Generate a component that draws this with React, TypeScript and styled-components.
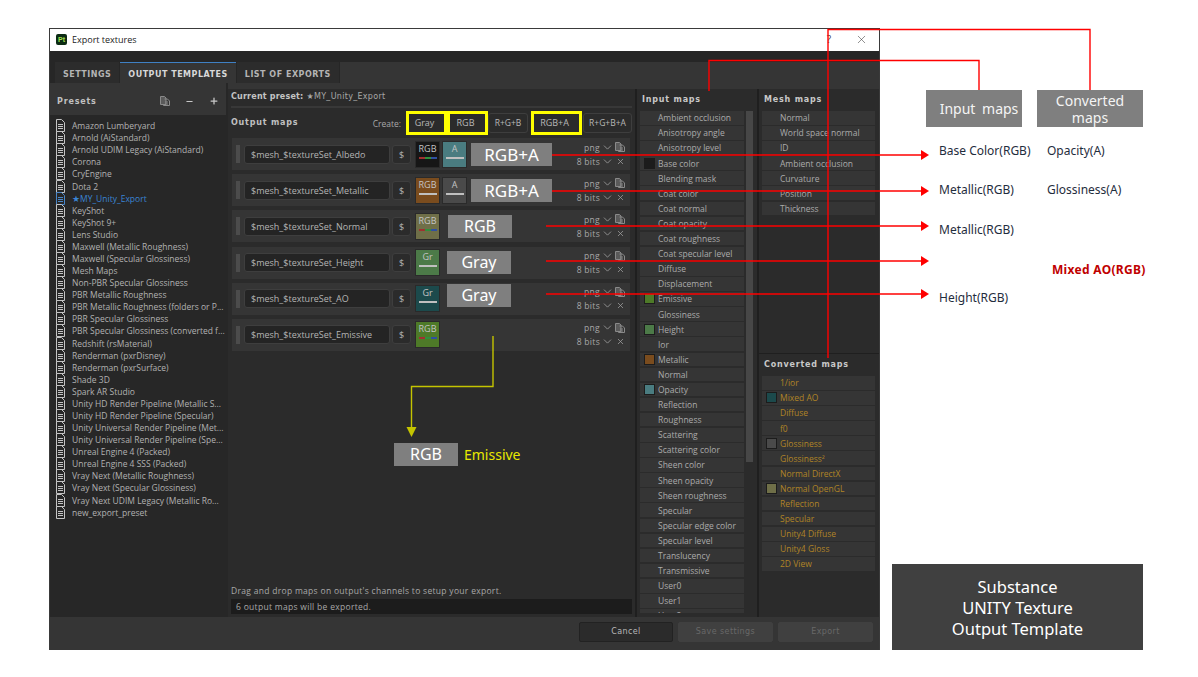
import styled, { createGlobalStyle } from "styled-components";
import { ChevronDown, Minus, Plus, X } from "lucide-react";

interface OutputRow {
  name: string;
  channels: { label: string; color: string; tri?: boolean }[];
  tag?: string;
  tagWidth?: number;
  tagGap?: number;
  tagTop?: number;
  tagSize?: number;
}

const PRESETS = [
  "Amazon Lumberyard",
  "Arnold (AiStandard)",
  "Arnold UDIM Legacy (AiStandard)",
  "Corona",
  "CryEngine",
  "Dota 2",
  "★MY_Unity_Export",
  "KeyShot",
  "KeyShot 9+",
  "Lens Studio",
  "Maxwell (Metallic Roughness)",
  "Maxwell (Specular Glossiness)",
  "Mesh Maps",
  "Non-PBR Specular Glossiness",
  "PBR Metallic Roughness",
  "PBR Metallic Roughness (folders or P...",
  "PBR Specular Glossiness",
  "PBR Specular Glossiness (converted f...",
  "Redshift (rsMaterial)",
  "Renderman (pxrDisney)",
  "Renderman (pxrSurface)",
  "Shade 3D",
  "Spark AR Studio",
  "Unity HD Render Pipeline (Metallic S...",
  "Unity HD Render Pipeline (Specular)",
  "Unity Universal Render Pipeline (Met...",
  "Unity Universal Render Pipeline (Spe...",
  "Unreal Engine 4 (Packed)",
  "Unreal Engine 4 SSS (Packed)",
  "Vray Next (Metallic Roughness)",
  "Vray Next (Specular Glossiness)",
  "Vray Next UDIM Legacy (Metallic Ro...",
  "new_export_preset",
];

const ROWS: OutputRow[] = [
  {
    name: "$mesh_$textureSet_Albedo",
    channels: [
      { label: "RGB", color: "#161616", tri: true },
      { label: "A", color: "#4a7c80" },
    ],
    tag: "RGB+A",
    tagWidth: 81,
    tagGap: 4,
    tagSize: 17,
  },
  {
    name: "$mesh_$textureSet_Metallic",
    channels: [
      { label: "RGB", color: "#7a4c1e" },
      { label: "A", color: "#4a4a4a" },
    ],
    tag: "RGB+A",
    tagWidth: 81,
    tagGap: 4,
    tagSize: 17,
  },
  {
    name: "$mesh_$textureSet_Normal",
    channels: [{ label: "RGB", color: "#6f6f48", tri: true }],
    tag: "RGB",
    tagWidth: 64,
    tagGap: 8,
  },
  {
    name: "$mesh_$textureSet_Height",
    channels: [{ label: "Gr", color: "#4c7a48" }],
    tag: "Gray",
    tagWidth: 64,
    tagGap: 7,
  },
  {
    name: "$mesh_$textureSet_AO",
    channels: [{ label: "Gr", color: "#1c4a4c" }],
    tag: "Gray",
    tagWidth: 64,
    tagGap: 7,
    tagTop: -7,
  },
  {
    name: "$mesh_$textureSet_Emissive",
    channels: [{ label: "RGB", color: "#4e7a28", tri: true }],
  },
];

const INPUT_MAPS: [string, string?][] = [
  ["Ambient occlusion"],
  ["Anisotropy angle"],
  ["Anisotropy level"],
  ["Base color", "#1c1c1c"],
  ["Blending mask"],
  ["Coat color"],
  ["Coat normal"],
  ["Coat opacity"],
  ["Coat roughness"],
  ["Coat specular level"],
  ["Diffuse"],
  ["Displacement"],
  ["Emissive", "#4e7a28"],
  ["Glossiness"],
  ["Height", "#4c7a48"],
  ["Ior"],
  ["Metallic", "#7a4c1e"],
  ["Normal"],
  ["Opacity", "#4a7c80"],
  ["Reflection"],
  ["Roughness"],
  ["Scattering"],
  ["Scattering color"],
  ["Sheen color"],
  ["Sheen opacity"],
  ["Sheen roughness"],
  ["Specular"],
  ["Specular edge color"],
  ["Specular level"],
  ["Translucency"],
  ["Transmissive"],
  ["User0"],
  ["User1"],
  ["User2"],
];

const MESH_MAPS: [string, string?][] = [
  ["Normal"],
  ["World space normal"],
  ["ID"],
  ["Ambient occlusion"],
  ["Curvature"],
  ["Position"],
  ["Thickness"],
];

const CONVERTED_MAPS: [string, string?][] = [
  ["1/ior"],
  ["Mixed AO", "#1c4a4c"],
  ["Diffuse"],
  ["f0"],
  ["Glossiness", "#4a4a4a"],
  ["Glossiness²"],
  ["Normal DirectX"],
  ["Normal OpenGL", "#6f6f48"],
  ["Reflection"],
  ["Specular"],
  ["Unity4 Diffuse"],
  ["Unity4 Gloss"],
  ["2D View"],
];

const ARROWS = [
  { x: 552, y: 155 },
  { x: 552, y: 191 },
  { x: 546, y: 226 },
  { x: 546, y: 261 },
  { x: 546, y: 294 },
];

function DocIcon({ color = "#c4c4c4" }: { color?: string }) {
  return (
    <svg width="9" height="13" viewBox="0 0 9 13" fill="none" stroke={color} strokeWidth="1">
      <path d="M0.5 0.5H5.5L8.5 3.5V12.5H0.5Z" />
      <path d="M2 5.5H7M2 7.5H7M2 9.5H7" />
    </svg>
  );
}

function CopyIcon() {
  return (
    <svg width="10" height="10" viewBox="0 0 10 10" fill="none" stroke="#8a8a8a" strokeWidth="1">
      <path d="M0.5 0.5H4.5L6 2V8.5H0.5Z" fill="#5a5a5a" />
      <path d="M4.5 3H7.5L9.5 5V9.5H3.5V8" />
      <path d="M5 6H8M5 8H8" />
    </svg>
  );
}

function MapList({ items, converted }: { items: [string, string?][]; converted?: boolean }) {
  return (
    <MapItems>
      {items.map(([label, swatch]) => (
        <MapItem key={label} $converted={converted}>
          <SwatchSlot>{swatch && <Swatch $color={swatch} />}</SwatchSlot>
          {label}
        </MapItem>
      ))}
    </MapItems>
  );
}

function Overlay() {
  return (
    <OverlaySvg width="1198" height="677" viewBox="0 0 1198 677" fill="none">
      <g stroke="#ff0000" strokeWidth="1.4">
        <path d="M828 358V29.5H1090V90" />
        <path d="M709 91V60.5H979V90" />
        {ARROWS.map((a) => (
          <path key={a.y} d={`M${a.x} ${a.y}H922`} />
        ))}
      </g>
      <g fill="#ff0000">
        {ARROWS.map((a) => (
          <path key={a.y} d={`M929 ${a.y}L921 ${a.y - 5}V${a.y + 5}Z`} />
        ))}
      </g>
      <path d="M493 336V386.5H411.5V428" stroke="#c4c400" strokeWidth="1.4" />
      <path d="M411.5 437L406.5 427H416.5Z" fill="#c4c400" />
    </OverlaySvg>
  );
}

export default function App() {
  return (
    <Page>
      <GlobalStyle />
      <Window>
        <TitleBar>
          <AppIcon>Pt</AppIcon>
          <TitleText>Export textures</TitleText>
          <HelpMark>?</HelpMark>
          <X size={13} strokeWidth={1} color="#333" />
        </TitleBar>
        <TabBar>
          <Tab>SETTINGS</Tab>
          <Tab $active>OUTPUT TEMPLATES</Tab>
          <Tab>LIST OF EXPORTS</Tab>
          <TabFill />
        </TabBar>
        <Columns>
          <PresetsPane>
            <PresetsHeader>
              <PresetsTitle>Presets</PresetsTitle>
              <HeaderIcons>
                <CopyIcon />
                <Minus size={9} strokeWidth={3} color="#c8c8c8" />
                <Plus size={10} strokeWidth={3} color="#c8c8c8" />
              </HeaderIcons>
            </PresetsHeader>
            <PresetList>
              {PRESETS.map((p) => (
                <PresetItem key={p} $selected={p.startsWith("★")}>
                  <DocIcon color={p.startsWith("★") ? "#4a86c8" : "#c4c4c4"} />
                  <span>{p}</span>
                </PresetItem>
              ))}
            </PresetList>
          </PresetsPane>
          <RightArea>
            <TopStrip />
            <Panes>
              <CenterPane>
                <CurrentPreset>
                  Current preset: <PresetName>★MY_Unity_Export</PresetName>
                </CurrentPreset>
                <Toolbar>
                  <ToolbarTitle>Output maps</ToolbarTitle>
                  <CreateLabel>Create:</CreateLabel>
                  <CreateButton $w={41} $marked>Gray</CreateButton>
                  <CreateButton $w={41} $marked>RGB</CreateButton>
                  <CreateButton $w={40}>R+G+B</CreateButton>
                  <CreateButton $w={51} $marked $gap={3}>RGB+A</CreateButton>
                  <CreateButton $w={49} $gap={1}>R+G+B+A</CreateButton>
                </Toolbar>
                <OutputRows>
                  {ROWS.map((row) => (
                    <OutputItem key={row.name}>
                      <Handle />
                      <NameField>{row.name}</NameField>
                      <DollarButton>$</DollarButton>
                      <Channels>
                        {row.channels.map((c) => (
                          <Channel key={c.label} $color={c.color}>
                            {c.label}
                            <ChannelBar $tri={c.tri} />
                          </Channel>
                        ))}
                      </Channels>
                      {row.tag && (
                        <TagBox $w={row.tagWidth} $gap={row.tagGap} $top={row.tagTop} $size={row.tagSize}>
                          {row.tag}
                        </TagBox>
                      )}
                      <FormatGrid>
                        <FormatText>png</FormatText>
                        <ChevronDown size={13} strokeWidth={1.5} color="#a0a0a0" />
                        <CopyIcon />
                        <FormatText>8 bits</FormatText>
                        <ChevronDown size={13} strokeWidth={1.5} color="#a0a0a0" />
                        <X size={9} color="#a0a0a0" />
                      </FormatGrid>
                    </OutputItem>
                  ))}
                </OutputRows>
                <EmissiveNote>
                  <TagBox $w={64} $gap={0}>RGB</TagBox>
                  <EmissiveLabel>Emissive</EmissiveLabel>
                </EmissiveNote>
                <HintText>Drag and drop maps on output's channels to setup your export.</HintText>
                <StatusBar>6 output maps will be exported.</StatusBar>
              </CenterPane>
              <InputPane>
                <PaneTitle>Input maps</PaneTitle>
                <InputBody>
                  <MapList items={INPUT_MAPS} />
                  <ScrollThumb />
                </InputBody>
              </InputPane>
              <SidePane>
                <MeshBlock>
                  <PaneTitle $inset={2}>Mesh maps</PaneTitle>
                  <MapList items={MESH_MAPS} />
                </MeshBlock>
                <ConvertedBlock>
                  <PaneTitle $inset={2}>Converted maps</PaneTitle>
                  <MapList items={CONVERTED_MAPS} converted />
                </ConvertedBlock>
              </SidePane>
            </Panes>
          </RightArea>
        </Columns>
        <Footer>
          <FooterButton $primary>Cancel</FooterButton>
          <FooterButton>Save settings</FooterButton>
          <FooterButton>Export</FooterButton>
        </Footer>
      </Window>
      <Notes>
        <CalloutRow>
          <Callout $w={96} $shifted>Input maps</Callout>
          <Callout $w={106}>Converted maps</Callout>
        </CalloutRow>
        <NoteRow $h={39}>
          <span>Base Color(RGB)</span>
          <span>Opacity(A)</span>
        </NoteRow>
        <NoteRow $h={38}>
          <span>Metallic(RGB)</span>
          <span>Glossiness(A)</span>
        </NoteRow>
        <NoteRow $h={42}>
          <span>Metallic(RGB)</span>
        </NoteRow>
        <NoteRow $h={39}>
          <span />
          <MixedLabel>Mixed AO(RGB)</MixedLabel>
        </NoteRow>
        <NoteRow $h={12}>
          <span>Height(RGB)</span>
        </NoteRow>
        <SummaryBox>
          Substance
          <br />
          UNITY Texture
          <br />
          Output Template
        </SummaryBox>
      </Notes>
      <Overlay />
    </Page>
  );
}

const GlobalStyle = createGlobalStyle`
  html, body {
    margin: 0;
    padding: 0;
    background: #fff;
    overflow: hidden;
  }
`;

const Page = styled.div`
  position: relative;
  display: flex;
  box-sizing: border-box;
  width: 1198px;
  height: 677px;
  padding: 28px 0 0 49px;
  background: #fff;
  font-family: "Open Sans", "Noto Sans", sans-serif;
`;

const Window = styled.div`
  display: flex;
  flex-direction: column;
  flex: none;
  box-sizing: border-box;
  width: 831px;
  height: 622px;
  border: 1px solid #3a3a3a;
  border-bottom: 0;
  background: #272727;
`;

const TitleBar = styled.div`
  display: flex;
  align-items: center;
  flex: none;
  height: 22px;
  padding: 0 11px 2px 6px;
  box-sizing: border-box;
  background: #fff;
`;

const AppIcon = styled.div`
  width: 11px;
  height: 11px;
  border-radius: 2px;
  background: #0c2b14;
  color: #a6e34f;
  font: bold 7px/11px "Liberation Sans", sans-serif;
  text-align: center;
`;

const TitleText = styled.div`
  margin-left: 5px;
  color: #222;
  font-size: 9px;
  flex: 1;
`;

const HelpMark = styled.div`
  margin-right: 24px;
  color: #444;
  font-size: 10px;
`;

const TabBar = styled.div`
  display: flex;
  align-items: flex-end;
  flex: none;
  height: 32px;
  padding-left: 5px;
  background: #262626;
`;

const Tab = styled.div<{ $active?: boolean }>`
  box-sizing: border-box;
  height: 21px;
  padding: 0 8px;
  margin-right: 1px;
  border-top: 1px solid ${(p) => (p.$active ? "#3f80c4" : "transparent")};
  background: ${(p) => (p.$active ? "#353535" : "#2c2c2c")};
  color: ${(p) => (p.$active ? "#d8d8d8" : "#b4b4b4")};
  font: bold 8px/23px "DejaVu Sans", sans-serif;
  letter-spacing: 0.5px;
`;

const TabFill = styled.div`
  flex: 1;
  height: 21px;
  background: #353535;
`;

const Columns = styled.div`
  display: flex;
  flex: 1;
  min-height: 0;
`;

const PresetsPane = styled.div`
  display: flex;
  flex-direction: column;
  flex: none;
  width: 176px;
  margin-right: 2px;
`;

const PresetsHeader = styled.div`
  display: flex;
  align-items: center;
  justify-content: space-between;
  flex: none;
  height: 32px;
  padding: 4px 7px 0 7px;
  box-sizing: border-box;
  background: #353535;
`;

const PresetsTitle = styled.div`
  color: #c0c0c0;
  font: bold 8px "DejaVu Sans", sans-serif;
  letter-spacing: 0.8px;
`;

const HeaderIcons = styled.div`
  display: flex;
  align-items: center;
  gap: 15px;
`;

const PresetList = styled.div`
  flex: 1;
  padding-top: 4.6px;
  background: #272727;
`;

const PresetItem = styled.div<{ $selected?: boolean }>`
  display: flex;
  align-items: center;
  gap: 7px;
  height: 12.09px;
  padding-left: 6px;
  color: ${(p) => (p.$selected ? "#3a84d4" : "#b2b2b2")};
  font-size: 8.5px;
  white-space: nowrap;
`;

const RightArea = styled.div`
  display: flex;
  flex-direction: column;
  flex: 1;
  min-width: 0;
`;

const TopStrip = styled.div`
  flex: none;
  height: 6px;
  background: #353535;
`;

const Panes = styled.div`
  display: flex;
  flex: 1;
  gap: 2px;
  min-height: 0;
  background: #1f1f1f;
`;

const CenterPane = styled.div`
  display: flex;
  flex-direction: column;
  flex: none;
  box-sizing: border-box;
  width: 407px;
  padding: 0 3px 3px;
  background: #2b2b2b;
`;

const CurrentPreset = styled.div`
  flex: none;
  height: 17px;
  border-bottom: 2px solid #383838;
  color: #c4c4c4;
  font: bold 8px/15px "DejaVu Sans", sans-serif;
  letter-spacing: 0.2px;
`;

const PresetName = styled.span`
  font-weight: normal;
  color: #a8a8a8;
  letter-spacing: 0.3px;
`;

const Toolbar = styled.div`
  display: flex;
  align-items: center;
  flex: none;
  height: 30px;
`;

const ToolbarTitle = styled.div`
  flex: 1;
  margin-top: -1px;
  color: #c0c0c0;
  font: bold 8px "DejaVu Sans", sans-serif;
  letter-spacing: 0.8px;
`;

const CreateLabel = styled.div`
  margin-right: 5px;
  color: #a8a8a8;
  font-size: 8.5px;
`;

const CreateButton = styled.div<{ $w: number; $marked?: boolean; $gap?: number }>`
  box-sizing: border-box;
  width: ${(p) => p.$w}px;
  height: ${(p) => (p.$marked ? 24 : 20)}px;
  margin-left: ${(p) => p.$gap ?? 0}px;
  padding-right: ${(p) => (p.$marked ? 4 : 0)}px;
  border: ${(p) => (p.$marked ? "3px solid #ffff00" : "1px solid #3e3e3e")};
  border-radius: ${(p) => (p.$marked ? 0 : 3)}px;
  color: #b8b8b8;
  font-size: ${(p) => (p.$marked ? 9 : 8.5)}px;
  line-height: 18px;
  text-align: center;
`;

const OutputRows = styled.div`
  display: flex;
  flex-direction: column;
  flex: none;
  gap: 4.2px;
  width: 398px;
  margin-left: 1px;
`;

const OutputItem = styled.div`
  display: flex;
  align-items: center;
  height: 32px;
  padding: 0 5px 0 4px;
  box-sizing: border-box;
  background: #353535;
`;

const Handle = styled.div`
  flex: none;
  width: 4px;
  height: 18px;
  margin-right: 4px;
  background: #4c4c4c;
`;

const NameField = styled.div`
  flex: none;
  box-sizing: border-box;
  width: 146px;
  height: 19px;
  padding-left: 6px;
  border: 1px solid #3e3e3e;
  border-radius: 3px;
  background: #242424;
  color: #b4b4b4;
  font-size: 9px;
  line-height: 17px;
`;

const DollarButton = styled.div`
  flex: none;
  box-sizing: border-box;
  width: 19px;
  height: 19px;
  margin-left: 2px;
  border: 1px solid #3e3e3e;
  border-radius: 3px;
  background: #2b2b2b;
  color: #b4b4b4;
  font-size: 9px;
  line-height: 17px;
  text-align: center;
`;

const Channels = styled.div`
  display: flex;
  flex: none;
  gap: 2px;
  margin-left: 4px;
`;

const Channel = styled.div<{ $color: string }>`
  display: flex;
  flex-direction: column;
  align-items: center;
  box-sizing: border-box;
  width: 25px;
  height: 27px;
  padding-top: 1px;
  background: ${(p) => p.$color};
  border: 1px solid #2a2a2a;
  color: #c4c4c4;
  font-size: 9px;
  line-height: 11px;
`;

const ChannelBar = styled.div<{ $tri?: boolean }>`
  width: 18px;
  height: 2px;
  margin-top: 3px;
  background: ${(p) =>
    p.$tri
      ? "linear-gradient(90deg, #a03030 33%, #30903c 33% 66%, #304fa0 66%)"
      : "#c0c0c0"};
`;

const TagBox = styled.div<{ $w?: number; $gap?: number; $top?: number; $size?: number }>`
  flex: none;
  width: ${(p) => p.$w}px;
  height: 23px;
  margin-left: ${(p) => p.$gap}px;
  margin-top: ${(p) => p.$top ?? 0}px;
  background: #7f7f7f;
  color: #fff;
  font-family: "Noto Sans", sans-serif;
  font-size: ${(p) => p.$size ?? 16}px;
  line-height: 23px;
  text-align: center;
`;

const FormatGrid = styled.div`
  display: grid;
  grid-template-columns: auto 13px 10px;
  grid-auto-rows: 14px;
  align-items: center;
  justify-items: end;
  column-gap: 1px;
  margin-left: auto;
`;

const FormatText = styled.div`
  color: #a8a8a8;
  font-size: 8.5px;
  letter-spacing: 0.3px;
`;

const EmissiveNote = styled.div`
  display: flex;
  align-items: center;
  flex: none;
  margin: 92px 0 0 163px;
`;

const EmissiveLabel = styled.div`
  margin-left: 6px;
  color: #e8e800;
  font-family: "Noto Sans", sans-serif;
  font-size: 14px;
`;

const HintText = styled.div`
  margin-top: auto;
  color: #a8a8a8;
  font-size: 8.5px;
  letter-spacing: 0.3px;
  line-height: 15px;
`;

const StatusBar = styled.div`
  flex: none;
  height: 15px;
  padding-left: 5px;
  margin-top: 1px;
  background: #1c1c1c;
  color: #a8a8a8;
  font-size: 8.5px;
  letter-spacing: 0.3px;
  line-height: 15px;
`;

const InputPane = styled.div`
  display: flex;
  flex-direction: column;
  flex: none;
  width: 120px;
  padding-bottom: 4px;
  box-sizing: border-box;
  background: #2b2b2b;
`;

const PaneTitle = styled.div<{ $inset?: number }>`
  flex: none;
  height: 22px;
  padding-left: ${(p) => p.$inset ?? 5}px;
  color: #c8c8c8;
  font: bold 8px/22px "DejaVu Sans", sans-serif;
  letter-spacing: 0.8px;
`;

const InputBody = styled.div`
  display: grid;
  grid-template-columns: 104px 7px;
  column-gap: 2px;
  align-items: start;
  flex: 1;
  min-height: 0;
  padding-left: 3px;
  overflow: hidden;
`;

const ScrollThumb = styled.div`
  height: 351px;
  background: #474747;
`;

const MapItems = styled.div`
  display: flex;
  flex-direction: column;
  gap: 1.5px;
  min-width: 0;
`;

const MapItem = styled.div<{ $converted?: boolean }>`
  display: flex;
  align-items: center;
  flex: none;
  height: 13.6px;
  background: #353535;
  color: ${(p) => (p.$converted ? "#b08426" : "#ababab")};
  font-size: 8.5px;
  white-space: nowrap;
`;

const SwatchSlot = styled.div`
  display: flex;
  align-items: center;
  justify-content: center;
  flex: none;
  width: 18px;
  height: 13px;
`;

const Swatch = styled.div<{ $color: string }>`
  box-sizing: border-box;
  width: 11px;
  height: 11px;
  border: 1px solid #1c1c1c;
  background: ${(p) => p.$color};
`;

const SidePane = styled.div`
  display: flex;
  flex-direction: column;
  flex: 1;
  min-width: 0;
  gap: 1px;
`;

const MeshBlock = styled.div`
  flex: none;
  box-sizing: border-box;
  height: 264px;
  padding: 0 4px 0 3px;
  background: #2b2b2b;
`;

const ConvertedBlock = styled.div`
  flex: 1;
  padding: 0 4px 0 3px;
  background: #2b2b2b;
`;

const Footer = styled.div`
  display: flex;
  align-items: center;
  justify-content: flex-end;
  flex: none;
  gap: 5px;
  height: 33px;
  padding: 0 6px 3px 0;
  box-sizing: border-box;
  background: #353535;
`;

const FooterButton = styled.div<{ $primary?: boolean }>`
  box-sizing: border-box;
  width: ${(p) => (p.$primary ? 94 : 95)}px;
  height: 20px;
  border: 1px solid ${(p) => (p.$primary ? "#222" : "#404040")};
  border-radius: 2px;
  background: ${(p) => (p.$primary ? "#2b2b2b" : "#404040")};
  color: ${(p) => (p.$primary ? "#b8b8b8" : "#686868")};
  font: 8px/18px "DejaVu Sans", sans-serif;
  letter-spacing: 0.4px;
  text-align: center;
`;

const Notes = styled.div`
  display: flex;
  flex-direction: column;
  flex: 1;
  height: 622px;
  color: #1f2d3d;
  font-family: "Noto Sans", sans-serif;
  font-size: 12px;
`;

const CalloutRow = styled.div`
  display: flex;
  align-items: stretch;
  gap: 15px;
  height: 37px;
  margin: 62px 0 4px 46px;
`;

const Callout = styled.div<{ $w: number; $shifted?: boolean }>`
  display: flex;
  align-items: center;
  justify-content: center;
  width: ${(p) => p.$w}px;
  padding: ${(p) => (p.$shifted ? "0 0 0 10px" : "0 8px")};
  box-sizing: border-box;
  background: #7f7f7f;
  color: #f4f4f4;
  font-size: 14px;
  line-height: 17px;
  word-spacing: 3px;
  text-align: center;
`;

const NoteRow = styled.div<{ $h: number }>`
  display: grid;
  grid-template-columns: 108px 1fr;
  align-items: center;
  height: ${(p) => p.$h}px;
  margin-left: 59px;
  white-space: nowrap;
`;

const MixedLabel = styled.span`
  padding-left: 5px;
  color: #c00000;
  font-weight: 700;
  letter-spacing: 0.3px;
`;

const SummaryBox = styled.div`
  margin: auto 0 0 12px;
  width: 251px;
  box-sizing: border-box;
  padding: 12px 0 11px;
  background: #404040;
  color: #fff;
  font-size: 16.5px;
  line-height: 21px;
  text-align: center;
`;

const OverlaySvg = styled.svg`
  position: absolute;
  top: 0;
  left: 0;
  pointer-events: none;
`;
